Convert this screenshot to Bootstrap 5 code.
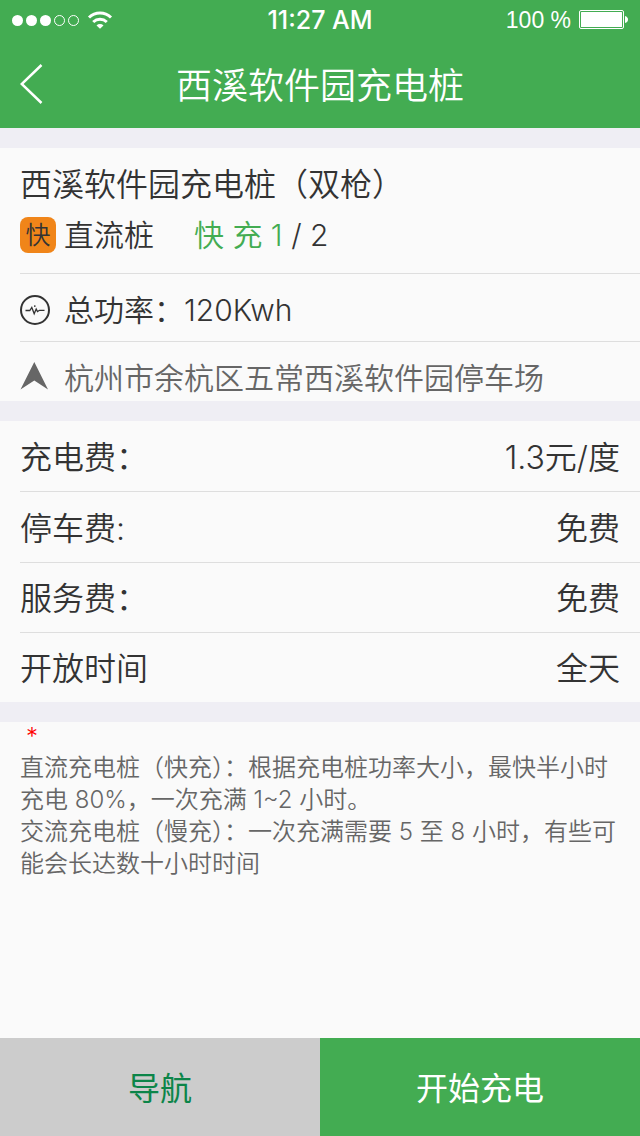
<!DOCTYPE html>
<html lang="zh-CN">
<head>
<meta charset="utf-8">
<meta name="viewport" content="width=device-width, initial-scale=1">
<title>西溪软件园充电桩</title>
<link href="https://cdn.jsdelivr.net/npm/bootstrap@5.3.0/dist/css/bootstrap.min.css" rel="stylesheet">
<style>
  :root { --brand: #43ac52; --ink: #333; --paper: #fafafa; --band: #efeef4; --rule: #dedede; }
  body { font-family: Inter, "Noto Sans CJK SC", sans-serif; font-weight: 350; color: var(--ink); background: var(--paper); }
  .app-header { background: var(--brand); }
  .status-bar { height: 40px; padding: 0 12px; font-size: 23px; line-height: 40px; font-family: "Liberation Sans", sans-serif; font-weight: 400; }
  .status-clock { font-family: Inter, sans-serif; font-size: 25px; font-weight: 500; }
  .title-bar { height: 88px; padding: 0 20px; }
  .title-bar h1 { font-size: 36px; font-weight: 350; line-height: 84px; padding-top: 4px; }
  .side-slot { width: 44px; }
  .band-top { border-top: 20px solid var(--band); }
  .station-name { font-size: 32px; line-height: 48px; font-weight: 350; }
  .text-md { font-size: 30px; line-height: 44px; }
  .text-lg { font-size: 32px; line-height: 48px; }
  .summary { height: 125px; padding-top: 13px; }
  .indent { margin-left: 20px; padding-right: 20px; }
  .ruled { border-top: 1px solid var(--rule); }
  .fast-tag { width: 36px; height: 36px; border-radius: 8px; background: #f08519; font-size: 25px; line-height: 36px; }
  .free-count { color: var(--brand); }
  .power-row { height: 68px; padding-top: 4px; }
  .address-row { height: 60px; padding-top: 14px; color: #666; }
  .icon-slot { width: 30px; margin-right: 14px; }
  .fee-row { height: 70px; padding-top: 3px; }
  .fee-row.ruled:nth-child(2) { height: 71px; }
  .notes { font-size: 24px; line-height: 32px; color: #666; padding: 0 20px 20px; }
  .notes-star { color: #f00; line-height: 30px; padding: 0 6px; }
  .action { height: 98px; padding-top: 10px; font-size: 32px; border: 0; border-radius: 0; }
  .action-nav, .action-nav:hover { background: #ccc; color: #0c8549; }
  .action-start, .action-start:hover { background: var(--brand); color: #fff; }
</style>
</head>
<body class="d-flex flex-column min-vh-100">
<header class="app-header text-white">
  <div class="status-bar d-flex align-items-center">
    <div class="col d-flex align-items-center">
      <svg width="101" height="20" viewBox="0 0 101 20" fill="#fff" role="img" aria-label="信号">
        <circle cx="5.5" cy="10.5" r="5.5"/><circle cx="19.5" cy="10.5" r="5.5"/><circle cx="33.5" cy="10.5" r="5.5"/>
        <g fill="none" stroke="#fff"><circle cx="47.5" cy="10.5" r="5"/><circle cx="61.5" cy="10.5" r="5"/></g>
        <g fill="none" stroke="#fff" stroke-width="3"><path d="M77 7.5a16 16 0 0 1 22 0"/><path d="M81.2 12a10 10 0 0 1 13.600 0"/></g>
        <path d="M84.500 15.500a5 5 0 0 1 7 0L88 18.800z"/>
      </svg>
    </div>
    <div class="status-clock">11:27 AM</div>
    <div class="col d-flex align-items-center justify-content-end gap-2">
      <span>100 %</span>
      <svg width="49" height="20" viewBox="0 0 49 20" role="img" aria-label="电池">
        <rect x=".5" y=".5" width="44" height="18" rx="1.500" fill="none" stroke="#fff"/>
        <rect x="2" y="2" width="41" height="15" rx=".5" fill="#fff"/>
        <path d="M46 6q3 1 3 3.500t-3 3.500z" fill="#fff"/>
      </svg>
    </div>
  </div>
  <nav class="title-bar d-flex align-items-center">
    <a href="#" class="side-slot d-flex" aria-label="返回">
      <svg width="23" height="40" viewBox="0 0 23 40" fill="none" stroke="#fff" stroke-width="2.500"><path d="M21.500 1L1.700 20l19.800 19"/></svg>
    </a>
    <h1 class="flex-grow-1 text-center m-0">西溪软件园充电桩</h1>
    <span class="side-slot"></span>
  </nav>
</header>

<main class="flex-grow-1">
  <section class="band-top">
    <div class="summary indent">
      <h2 class="station-name m-0">西溪软件园充电桩（双枪）</h2>
      <div class="d-flex align-items-center text-md mt-1">
        <span class="fast-tag text-center me-2">快</span>
        <span>直流桩</span>
        <span class="ps-4 ms-3"><span class="free-count">快 充 1</span> / 2</span>
      </div>
    </div>
    <div class="power-row indent ruled d-flex align-items-center text-md">
      <span class="icon-slot d-flex">
        <svg width="30" height="30" viewBox="0 0 30 30" fill="none" stroke="#333"><circle cx="15" cy="15" r="14" stroke-width="2"/><path d="M5.500 15.500h4.300l2-3 2.400 6.200 2-4.700 1.300 2.600 2-1.300h5" stroke-width="1.300"/><path d="M14.800 10.200v1.800" stroke-width="1.300"/></svg>
      </span>
      <span>总功率：120Kwh</span>
    </div>
    <div class="address-row indent ruled d-flex align-items-start text-md">
      <span class="icon-slot d-flex pt-1">
        <svg width="30" height="32" viewBox="0 -2 30 32" fill="#666"><path d="M14.300 0L28 27.500 14.300 18.500.5 27.500z"/></svg>
      </span>
      <span>杭州市余杭区五常西溪软件园停车场</span>
    </div>
  </section>

  <section class="band-top text-lg">
    <div class="fee-row indent d-flex align-items-center justify-content-between"><span>充电费：</span><span>1.3元/度</span></div>
    <div class="fee-row indent ruled d-flex align-items-center justify-content-between"><span>停车费:</span><span>免费</span></div>
    <div class="fee-row indent ruled d-flex align-items-center justify-content-between"><span>服务费：</span><span>免费</span></div>
    <div class="fee-row indent ruled d-flex align-items-center justify-content-between"><span>开放时间</span><span>全天</span></div>
  </section>

  <section class="band-top notes">
    <div class="notes-star">*</div>
    <p class="m-0">直流充电桩（快充）：根据充电桩功率大小，最快半小时充电 80%，一次充满 1~2 小时。</p>
    <p class="m-0">交流充电桩（慢充）：一次充满需要 5 至 8 小时，有些可能会长达数十小时时间</p>
  </section>
</main>

<footer class="d-flex">
  <button type="button" class="btn action action-nav col">导航</button>
  <button type="button" class="btn action action-start col">开始充电</button>
</footer>
<script src="https://cdn.jsdelivr.net/npm/bootstrap@5.3.0/dist/js/bootstrap.bundle.min.js"></script>
</body>
</html>
